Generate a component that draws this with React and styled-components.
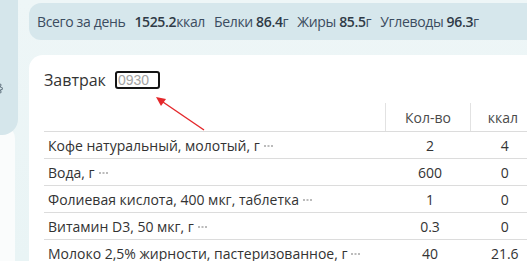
import React from 'react'
import styled, { createGlobalStyle } from 'styled-components'

const GlobalStyle = createGlobalStyle`
    html, body {
        margin: 0;
        padding: 0;
        width: 527px;
        height: 261px;
        overflow: hidden;
        background: linear-gradient(180deg, #eef6f7 0%, #e9f4f5 100%);
        font-family: "Open Sans", "Liberation Sans", sans-serif;
    }
`

const Page = styled.div`
    display: grid;
    grid-template-columns: 18px 521px;
    column-gap: 11px;
    width: 560px;
    height: 261px;
`

const Side = styled.div`
    display: flex;
    flex-direction: column;
`

const SidePanel = styled.div`
    height: 135px;
    background: #d5e6eb;
    border-bottom-right-radius: 16px;
    display: flex;
    align-items: flex-start;
    padding-top: 82px;
    box-sizing: border-box;
    overflow: hidden;
    position: relative;
    z-index: 1;
`

const SideCard = styled.div`
    flex: 1;
    margin-top: -10px;
    margin-right: 3px;
    background: #fafcfc;
    border-top-right-radius: 14px;
`

const Gear = styled.svg`
    margin-left: -10px;
    flex-shrink: 0;
`

const Main = styled.div`
    display: flex;
    flex-direction: column;
    gap: 15px;
    padding-top: 3px;
`

const Summary = styled.div`
    height: 37px;
    background: #d6e7ec;
    border-radius: 12px;
    display: flex;
    align-items: center;
    gap: 9px;
    padding-left: 8px;
    font-size: 14px;
    color: #3b4c60;
    white-space: nowrap;
    letter-spacing: -0.35px;
`

const Val = styled.b`
    font-weight: 600;
    color: #2f3a46;
`

const Card = styled.div`
    flex: 1;
    background: #ffffff;
    border-radius: 14px 14px 0 0;
    padding: 16px 15px 0 15px;
    position: relative;
`

const MealHead = styled.div`
    display: flex;
    align-items: center;
    gap: 9px;
    height: 18px;
`

const MealTitle = styled.span`
    font-size: 16px;
    color: #333;
    line-height: 18px;
`

const TimeInput = styled.input`
    box-sizing: border-box;
    width: 45px;
    height: 18px;
    border: 2px solid #151515;
    border-radius: 3px;
    padding: 0 0 0 1px;
    font-family: "Liberation Sans", Arial, sans-serif;
    font-size: 14px;
    outline: none;
    &::placeholder {
        color: #a3a3a3;
    }
`

const Arrow = styled.svg`
    position: absolute;
    left: 124px;
    top: 40px;
`

const Table = styled.table`
    margin-top: 14px;
    width: 491px;
    border-collapse: collapse;
    font-size: 14px;
    color: #333;
`

const Th = styled.th`
    height: 28px;
    padding: 0;
    font-weight: 500;
    color: #4a4a4a;
    text-align: center;
    width: ${p => p.$w || 'auto'};
    border-left: ${p => (p.$line ? '1px solid #e2e2e2' : 'none')};
    border-bottom: 1px solid #dcdcdc;
`

const Td = styled.td`
    height: 26px;
    padding: 0 0 0 4px;
    border-bottom: 1px solid #dcdcdc;
    text-align: ${p => (p.$num ? 'center' : 'left')};
    white-space: nowrap;
`

const Dots = styled.svg`
    margin-left: 4px;
    vertical-align: middle;
`

const rows = [
    ['Кофе натуральный, молотый, г', '2', '4'],
    ['Вода, г', '600', '0'],
    ['Фолиевая кислота, 400 мкг, таблетка', '1', '0'],
    ['Витамин D3, 50 мкг, г', '0.3', '0'],
    ['Молоко 2,5% жирности, пастеризованное, г', '40', '21.6'],
]

const MoreDots = () => (
    <Dots width="10" height="3" viewBox="0 0 10 3">
        <rect x="0" y="0" width="2" height="2" fill="#bbb" />
        <rect x="3.5" y="0" width="2" height="2" fill="#bbb" />
        <rect x="7" y="0" width="2" height="2" fill="#bbb" />
    </Dots>
)

const App = () => {
    return (
        <Page>
            <GlobalStyle />
            <Side>
                <SidePanel>
                    <Gear width="13" height="13" viewBox="0 0 24 24" fill="none" stroke="#6b7c88" strokeWidth="2">
                        <circle cx="12" cy="12" r="3" />
                        <path d="M19.4 15a1.65 1.65 0 0 0 .33 1.82l.06.06a2 2 0 1 1-2.830 2.83l-.06-.06a1.65 1.65 0 0 0-1.820-.33 1.65 1.65 0 0 0-1 1.51V21a2 2 0 1 1-4 0v-.09A1.65 1.65 0 0 0 9 19.4a1.65 1.65 0 0 0-1.820.33l-.06.06a2 2 0 1 1-2.830-2.830l.06-.06A1.65 1.65 0 0 0 4.6 15a1.65 1.65 0 0 0-1.510-1H3a2 2 0 1 1 0-4h.09A1.65 1.65 0 0 0 4.6 9a1.65 1.65 0 0 0-.33-1.820l-.06-.06a2 2 0 1 1 2.830-2.830l.06.06A1.65 1.65 0 0 0 9 4.6a1.65 1.65 0 0 0 1-1.510V3a2 2 0 1 1 4 0v.09a1.65 1.65 0 0 0 1 1.510 1.65 1.65 0 0 0 1.820-.33l.06-.06a2 2 0 1 1 2.830 2.830l-.06.06A1.65 1.65 0 0 0 19.4 9a1.65 1.65 0 0 0 1.510 1H21a2 2 0 1 1 0 4h-.09a1.65 1.65 0 0 0-1.510 1z" />
                    </Gear>
                </SidePanel>
                <SideCard />
            </Side>
            <Main>
                <Summary>
                    <span>Всего за день</span>
                    <span><Val>1525.2</Val>ккал</span>
                    <span>Белки <Val>86.4</Val>г</span>
                    <span>Жиры <Val>85.5</Val>г</span>
                    <span>Углеводы <Val>96.3</Val>г</span>
                </Summary>
                <Card>
                    <MealHead>
                        <MealTitle>Завтрак</MealTitle>
                        <TimeInput placeholder="0930" />
                    </MealHead>
                    <Arrow width="60" height="40" viewBox="0 0 60 40">
                        <line x1="51" y1="35" x2="7" y2="5" stroke="#e4282b" strokeWidth="1.4" />
                        <polygon points="3,2 13,4 8,11" fill="#e4282b" />
                    </Arrow>
                    <Table>
                        <thead>
                            <tr>
                                <Th />
                                <Th $line $w="84px">Кол-во</Th>
                                <Th $line $w="64px">ккал</Th>
                            </tr>
                        </thead>
                        <tbody>
                            {rows.map(r => (
                                <tr key={r[0]}>
                                    <Td>{r[0]}<MoreDots /></Td>
                                    <Td $num>{r[1]}</Td>
                                    <Td $num>{r[2]}</Td>
                                </tr>
                            ))}
                        </tbody>
                    </Table>
                </Card>
            </Main>
        </Page>
    )
}

export default App
